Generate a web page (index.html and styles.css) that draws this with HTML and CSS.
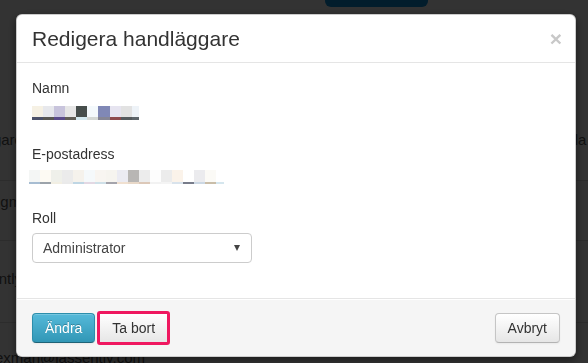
FILE: index.html
```html
<!DOCTYPE html>
<html lang="sv">
  <head>
    <meta charset="UTF-8" />
    <meta name="viewport" content="width=device-width, initial-scale=1.0" />
    <title>Redigera handläggare</title>
    <link rel="stylesheet" href="styles.css">
  </head>
  <body>
    <div class="page">
      <div class="topbar"><span class="topbar-btn"></span></div>
      <div class="list">
        <div class="row row-1"><span>Handläggare</span><span class="right-text">Visa alla c</span></div>
        <div class="row row-2"><span>Fredrik Ingmarsson</span></div>
        <div class="row row-3"><span>Not currently active</span></div>
        <div class="row row-4"><span class="mail">exman@lassently.com</span></div>
      </div>
    </div>

    <div class="backdrop"></div>

    <div class="modal">
      <div class="modal-header">
        <h3>Redigera handläggare</h3>
        <span class="close">&times;</span>
      </div>
      <div class="modal-body">
        <div class="field">
          <label>Namn</label>
          <div class="mask mask-name"></div>
        </div>
        <div class="field">
          <label>E-postadress</label>
          <div class="mask mask-mail"></div>
        </div>
        <div class="field field-last">
          <label>Roll</label>
          <div class="select">
            <span>Administrator</span>
            <span class="caret"></span>
          </div>
        </div>
      </div>
      <div class="modal-footer">
        <button class="btn btn-info">Ändra</button>
        <button class="btn btn-marked">Ta bort</button>
        <button class="btn btn-cancel">Avbryt</button>
      </div>
    </div>
  </body>
</html>
```

FILE: styles.css
```css
* {
  padding: 0;
  margin: 0;
  box-sizing: border-box;
}
body {
  width: 588px;
  height: 363px;
  overflow: hidden;
  background: #fff;
  font-family: "Liberation Sans", Arial, sans-serif;
  font-size: 14px;
  line-height: 20px;
  color: #333;
}

/* page behind the dialog */

.topbar {
  height: 8px;
  padding-left: 325px;
}
.topbar-btn {
  display: block;
  width: 103px;
  height: 7px;
  background: #0b90da;
  border-radius: 0 0 6px 6px;
}
.list {
  margin-top: 102px;
  margin-left: -63px;
  font-size: 15px;
  color: #555;
}
.row {
  display: flex;
  justify-content: space-between;
  border-bottom: 1px solid #ddd;
  white-space: nowrap;
}
.row-1 {
  height: 71px;
  padding-top: 20px;
}
.row-2 {
  height: 60px;
  padding-top: 11px;
}
.row-3 {
  height: 82px;
  padding-top: 28px;
}
.row-4 {
  height: 40px;
  padding-top: 25px;
  border-bottom: 0;
  overflow: hidden;
}
.right-text {
  margin-right: -10px;
}
.mail {
  margin-left: 58px;
}
.backdrop {
  position: fixed;
  top: 0;
  left: 0;
  right: 0;
  bottom: 0;
  background: rgba(0, 0, 0, 0.8);
}

/* dialog */

.modal {
  position: fixed;
  top: 14px;
  left: 16px;
  width: 560px;
  background: #fff;
  border: 1px solid rgba(0, 0, 0, 0.2);
  border-radius: 6px;
  box-shadow: 0 3px 9px rgba(0, 0, 0, 0.5);
}
.modal-header {
  display: flex;
  justify-content: space-between;
  align-items: center;
  padding: 9px 15px;
  border-bottom: 1px solid #e5e5e5;
}
.modal-header h3 {
  font-size: 21px;
  line-height: 29px;
  font-weight: normal;
  color: #333;
}
.close {
  font-size: 21px;
  line-height: 1;
  font-weight: bold;
  color: #c8c8c8;
  margin-top: -1px;
  margin-right: -2px;
}
.modal-body {
  padding: 15px 15px 35px;
}
.field {
  margin-bottom: 24px;
}
.field-last {
  margin-bottom: 0;
}
label {
  display: block;
}
.mask {
  height: 14px;
  background-repeat: no-repeat;
}
.mask-name {
  width: 107px;
  margin-top: 8px;
  background-image:
    linear-gradient(to right, #f6f1e4 0 11px, #e7e8ec 11px 22px, #c8c4dc 22px 33px, #e6e6e6 33px 44px, #474e4c 44px 55px, #f4f9fc 55px 66px, #8088b6 66px 78px, #e6e4f0 78px 89px, #e2e2e2 89px 100px, #eef3f8 100px),
    linear-gradient(to right, #4c5169 0 11px, #595752 11px 22px, #5a4b89 22px 33px, #615e57 33px 44px, #d3e8ef 44px 55px, #d4d8d5 55px 66px, #868695 66px 78px, #8d4a4c 78px 89px, #555a5d 89px 100px, #5d656a 100px);
  background-size: 100% 11px, 100% 3px;
  background-position: 0 0, 0 11px;
}
.mask-mail {
  width: 195px;
  margin-top: 6px;
  margin-left: -3px;
  background-image:
    linear-gradient(to right, #f4f6f5 0 11px, #fdfaf3 11px 22px, #eff0ea 22px 33px, #ebebeb 33px 44px, #f5f2ec 44px 55px, #f5f9fb 55px 66px, #f8f5f1 66px 77px, #f6f4ef 77px 88px, #ebebf2 88px 99px, #b8b6b4 99px 110px, #ececec 110px 121px, #fdfdfd 121px 132px, #ececec 132px 143px, #fbf3ea 143px 154px, #fff 154px 165px, #ebebee 165px 176px, #fbfaf6 176px 187px, #fff 187px),
    linear-gradient(to right, #a7bdd2 0 11px, #9ca3aa 11px 22px, #f2efe3 22px 33px, #eaeaea 33px 44px, #bfd6e4 44px 55px, #e3d8e3 55px 66px, #cfe0e8 66px 77px, #a4a4ac 77px 88px, #f0e0d0 88px 99px, #e8d8c8 99px 110px, #dcc8b8 110px 121px, #f2f2f2 121px 132px, #f4f4f4 132px 143px, #d9e3ec 143px 154px, #787c8a 154px 165px, #ccd8e4 165px 176px, #c9bda8 176px 187px, #d5e6ee 187px);
  background-size: 100% 12px, 100% 2px;
  background-position: 0 0, 0 12px;
}
.select {
  display: flex;
  justify-content: space-between;
  align-items: center;
  width: 220px;
  height: 30px;
  margin-top: 5px;
  padding: 0 10px;
  border: 1px solid #ccc;
  border-radius: 4px;
  color: #444;
}
.caret {
  width: 0;
  height: 0;
  margin-right: 1px;
  border-left: 3.5px solid transparent;
  border-right: 3.5px solid transparent;
  border-top: 6px solid #444;
}

/* footer + buttons */

.modal-footer {
  display: flex;
  align-items: center;
  padding: 14px 15px 13px;
  background: #f5f5f5;
  border-top: 1px solid #e5e5e5;
  box-shadow: inset 0 1px 0 #fff;
  border-radius: 0 0 6px 6px;
}
.btn {
  font-family: "Liberation Sans", Arial, sans-serif;
  font-size: 14px;
  line-height: 20px;
  padding: 4px 12px;
  height: 30px;
  border-radius: 4px;
  border: 1px solid #c5c5c5;
  border-bottom-color: #b3b3b3;
  color: #333;
  background: linear-gradient(#fff, #e6e6e6);
  box-shadow: inset 0 1px 0 rgba(255, 255, 255, 0.2), 0 1px 2px rgba(0, 0, 0, 0.05);
}
.btn-info {
  color: #fff;
  text-shadow: 0 -1px 0 rgba(0, 0, 0, 0.25);
  background: linear-gradient(#55b9d9, #3197b6);
  border-color: #2c8eab #2c8eab #1f6377;
}
.btn-marked {
  margin-left: 4px;
  border-radius: 1px;
  outline: 3px solid #ef1860;
  outline-offset: -1px;
}
.btn-cancel {
  margin-left: auto;
}
```
